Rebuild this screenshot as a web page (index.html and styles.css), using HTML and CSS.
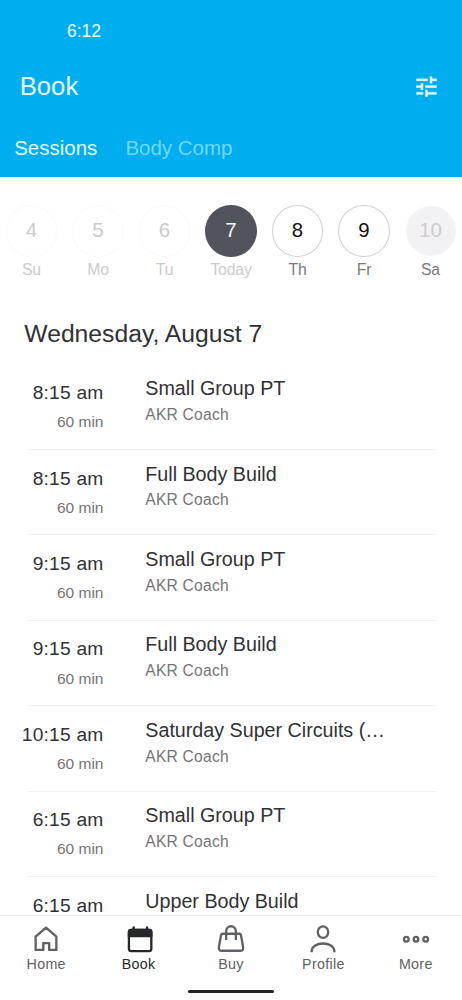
FILE: index.html
```html
<!DOCTYPE html>
<html lang="en">
<head>
<meta charset="utf-8">
<title>Book</title>
<link rel="stylesheet" href="styles.css">
</head>
<body>
<div class="app">
  <header class="header">
    <div class="clock">6:12</div>
    <div class="title-bar">
      <h1 class="title">Book</h1>
      <svg class="filter" viewBox="0 0 24 24"><path d="M3 17v2h6v-2H3zM3 5v2h10V5H3zm10 16v-2h8v-2h-8v-2h-2v6h2zM7 9v2H3v2h4v2h2V9H7zm14 4v-2H11v2h10zm-6-4h2V7h4V5h-4V3h-2v6z"/></svg>
    </div>
    <nav class="tabs"><span class="tab">Sessions</span><span class="tab tab-off">Body Comp</span></nav>
  </header>
  <main class="content">
    <div class="week">
      <div class="day past"><span class="num">4</span><span class="name">Su</span></div>
      <div class="day past"><span class="num">5</span><span class="name">Mo</span></div>
      <div class="day past"><span class="num">6</span><span class="name">Tu</span></div>
      <div class="day today"><span class="num">7</span><span class="name">Today</span></div>
      <div class="day"><span class="num">8</span><span class="name">Th</span></div>
      <div class="day"><span class="num">9</span><span class="name">Fr</span></div>
      <div class="day closed"><span class="num">10</span><span class="name">Sa</span></div>
    </div>
    <h2 class="date">Wednesday, August 7</h2>
    <div class="list">
      <div class="row"><div class="when"><div class="time">8:15 am</div><div class="length">60 min</div></div><div class="what"><div class="class-name">Small Group PT</div><div class="coach">AKR Coach</div></div></div>
      <div class="row"><div class="when"><div class="time">8:15 am</div><div class="length">60 min</div></div><div class="what"><div class="class-name">Full Body Build</div><div class="coach">AKR Coach</div></div></div>
      <div class="row"><div class="when"><div class="time">9:15 am</div><div class="length">60 min</div></div><div class="what"><div class="class-name">Small Group PT</div><div class="coach">AKR Coach</div></div></div>
      <div class="row"><div class="when"><div class="time">9:15 am</div><div class="length">60 min</div></div><div class="what"><div class="class-name">Full Body Build</div><div class="coach">AKR Coach</div></div></div>
      <div class="row"><div class="when"><div class="time">10:15 am</div><div class="length">60 min</div></div><div class="what"><div class="class-name">Saturday Super Circuits (…</div><div class="coach">AKR Coach</div></div></div>
      <div class="row"><div class="when"><div class="time">6:15 am</div><div class="length">60 min</div></div><div class="what"><div class="class-name">Small Group PT</div><div class="coach">AKR Coach</div></div></div>
      <div class="row"><div class="when"><div class="time">6:15 am</div></div><div class="what"><div class="class-name">Upper Body Build</div></div></div>
    </div>
  </main>
  <footer class="footer">
    <nav class="nav">
      <div class="item"><svg class="icon" viewBox="0 0 30 30"><path d="M3.900 12.500 15 2.700l11.100 9.800v14.200h-7.700v-7.300h-6.300v7.300H3.900z"/></svg><span>Home</span></div>
      <div class="item active"><svg class="icon" viewBox="0 0 30 30"><rect x="4.200" y="5.200" width="24" height="22.800" rx="2.600"/><path class="solid" d="M3 13V7.500Q3 4 6.500 4h19.400Q29.400 4 29.400 7.500V13z"/><path d="M9.300 1.600V6M23.600 1.600V6"/></svg><span>Book</span></div>
      <div class="item"><svg class="icon" viewBox="0 0 30 30"><path d="M6.200 9.400h17.600q1.600 0 1.900 1.600l2.300 12.900q.5 3.700-3.200 3.700H5.200q-3.700 0-3.200-3.700L4.300 11q.3-1.600 1.900-1.600zM9.800 16V7.200c0-7.800 10.400-7.800 10.400 0V16"/></svg><span>Buy</span></div>
      <div class="item"><svg class="icon" viewBox="0 0 30 30"><ellipse cx="15" cy="7.600" rx="5.600" ry="6.200"/><path d="M2.800 29.200v-.8c0-11.400 24.400-11.400 24.400 0v.8"/></svg><span>Profile</span></div>
      <div class="item"><svg class="icon" viewBox="0 0 30 30"><circle cx="4.600" cy="15.200" r="2.500"/><circle cx="15" cy="15.200" r="2.500"/><circle cx="25.400" cy="15.200" r="2.500"/></svg><span>More</span></div>
    </nav>
    <div class="home-bar"></div>
  </footer>
</div>
</body>
</html>
```
FILE: styles.css
```css
* { box-sizing: border-box; }
body { margin: 0; background: #fff; font-family: "Liberation Sans", Arial, sans-serif; color: #303135; }
h1, h2 { margin: 0; font-weight: 400; }
.app { width: 462px; height: 1000px; display: flex; flex-direction: column; overflow: hidden; }

.header { flex: none; height: 176.600px; background: #00aeef; color: #e4fbff; padding-top: 20px; }
.clock { font-size: 17.500px; line-height: 22px; padding-left: 67px; }
.title-bar { display: flex; justify-content: space-between; align-items: center; height: 30px; margin-top: 29px; padding: 0 22px 0 19.700px; }
.title { font-size: 25.700px; line-height: 30px; }
.filter { width: 27px; height: 27px; fill: #e4fbff; stroke: #e4fbff; stroke-width: .2; }
.tabs { display: flex; gap: 28px; padding-left: 14.200px; margin-top: 34px; font-size: 20.500px; line-height: 26px; }
.tab-off { color: #70d8fa; }

.content { flex: 1; min-height: 0; overflow: hidden; padding-top: 28.400px; }
.week { display: grid; grid-template-columns: repeat(7, 66.500px); justify-content: center; }
.day { display: flex; flex-direction: column; align-items: center; gap: 4px; }
.num { width: 51.600px; height: 52px; border: 1px solid #d2d2d4; border-radius: 50%; display: flex; align-items: center; justify-content: center; font-size: 20.400px; color: #111; }
.name { font-size: 15.800px; line-height: 18px; letter-spacing: -.1px; color: #7a7a7c; }
.past .num { border-color: #fafafa; color: #cbcbcb; }
.past .name, .today .name { color: #cbcbcb; }
.today .num { background: #51545d; border-color: #51545d; color: #f4f6fa; }
.today .name { letter-spacing: -.2px; }
.closed .num { width: 50px; height: 50px; margin: 1px 0; background: #f2f1f4; border-color: #f4f3f5; color: #cdccd0; }

.date { font-size: 24.700px; line-height: 30px; margin: 40.200px 0 15.400px 24.300px; }
.row { display: flex; position: relative; height: 85.420px; margin: 0 25px 0 20px; }
.row::after { content: ""; position: absolute; left: 7px; right: 0; bottom: 0; height: 1px; background: #f1f1f2; }
.when { width: 83.500px; padding-top: 16.600px; text-align: right; white-space: nowrap; }
.time { font-size: 19.200px; line-height: 24px; letter-spacing: .22px; }
.length { font-size: 15.500px; line-height: 20px; margin-top: 7.200px; color: #747476; }
.what { padding: 11.700px 0 0 41.800px; white-space: nowrap; }
.class-name { font-size: 19.700px; line-height: 24px; }
.coach { font-size: 15.600px; line-height: 20px; margin-top: 4.700px; letter-spacing: .23px; color: #747476; }

.footer { flex: none; height: 85px; background: #fff; border-top: 1px solid #ededee; }
.nav { display: grid; grid-template-columns: repeat(5, 1fr); padding-top: 9px; }
.item { display: flex; flex-direction: column; align-items: center; gap: 3px; font-size: 14.300px; line-height: 16px; letter-spacing: .3px; color: #606164; }
.active { color: #27282b; }
.icon { width: 28px; height: 28px; fill: none; stroke: currentColor; stroke-width: 2.500; stroke-linejoin: round; stroke-linecap: butt; }
.solid { fill: currentColor; stroke: none; }
.home-bar { width: 86px; height: 3px; border-radius: 2px; background: #222326; margin: 18px auto 0; }
```
